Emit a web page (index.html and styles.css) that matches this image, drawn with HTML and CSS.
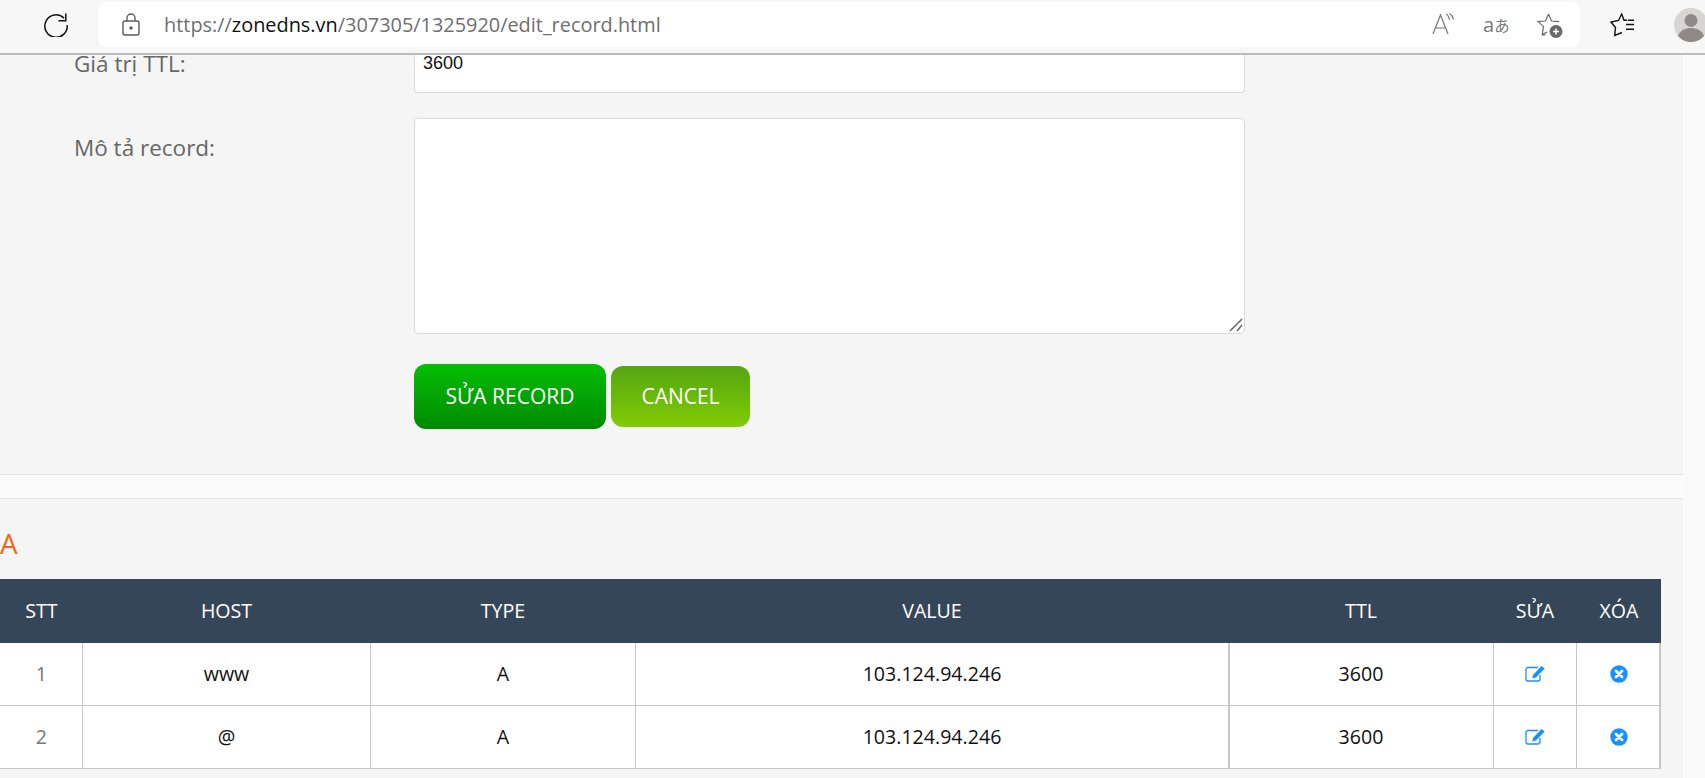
FILE: index.html
```html
<!DOCTYPE html>
<html lang="vi">
<head>
<meta charset="utf-8">
<title>edit record</title>
<link rel="stylesheet" href="styles.css">
</head>
<body>
<div class="toolbar">
  <svg class="reload" width="24" height="24" viewBox="0 0 24 24" fill="none" stroke="#111" stroke-width="1.5"><path d="M20 5.200A11.200 11.200 0 1 0 23.200 12"/><path d="M21.800.5v7.200h-7.300"/></svg>
  <div class="addressbar">
    <svg class="lock" width="20" height="24" viewBox="0 0 20 24" fill="none" stroke="#5c5c5c" stroke-width="1.4"><rect x="2" y="8" width="16" height="14" rx="2"/><path d="M6 8V5a4 4 0 0 1 8 0v3"/><circle cx="10" cy="15" r="1" fill="#5c5c5c"/></svg>
    <div class="url">https://<b>zonedns.vn</b>/307305/1325920/edit_record.html</div>
    <svg class="readaloud" width="24" height="24" viewBox="0 0 24 24" fill="none" stroke="#777" stroke-width="1.2"><path d="M1 21 8.500 2 16 21M3.800 15h9.400"/><path d="M14 1c2 1 3 3 3.500 6M17.500 .5c2 1.200 3.500 3.500 4 6"/></svg>
    <span class="translate">a<span class="kana">あ</span></span>
    <svg class="favadd" width="28" height="28" viewBox="0 0 28 28"><path d="M13.500 3l3 7 7.500.6M10.500 24l-3.300 0 1.300-8.600L3 10.600l7.500-.6 3-7M7.200 23.600l5-2.600" fill="none" stroke="#6a6a6a" stroke-width="1.2"/><circle cx="21" cy="20.500" r="6.500" fill="#6a6a6a"/><path d="M18 20.500h6M21 17.500v6" stroke="#fff" stroke-width="1.600"/></svg>
  </div>
  <svg class="favlist" width="26" height="26" viewBox="0 0 26 26" fill="none" stroke="#111" stroke-width="1.400"><path d="M17 7.200h-3L11.700 1 8.500 7.500 1 9l4.500 5.500-.8 8 7.300-3"/><path d="M18 7.200h6M16 11.500h8M16 16.300h8"/></svg>
  <svg class="avatar" width="34" height="34" viewBox="0 0 34 34"><circle cx="17" cy="17" r="17" fill="#d8d6d3"/><circle cx="17" cy="12.500" r="6.500" fill="#8f8a85"/><path d="M4 28c2-6 8-8 13-8s11 2 13 8a17 17 0 0 1-26 0z" fill="#8f8a85"/></svg>
</div>

<div class="page">
  <div class="content">
    <form class="record-form">
      <div class="form-row ttl-row">
        <label>Giá trị TTL:</label>
        <input class="ttl-input" type="text" value="3600">
      </div>
      <div class="form-row">
        <label>Mô tả record:</label>
        <div class="desc-wrap">
          <textarea class="desc-input"></textarea>
          <svg class="grip" width="14" height="14" viewBox="0 0 14 14" stroke="#666" stroke-width="1.500"><path d="M1 13 13 1M8 13l5-6"/></svg>
        </div>
      </div>
      <div class="form-actions">
        <button class="btn btn-save" type="button">SỬA RECORD</button>
        <button class="btn btn-cancel" type="button">CANCEL</button>
      </div>
    </form>
    <div class="divider"></div>
    <h3 class="record-title">A</h3>
    <table class="record-table">
      <colgroup>
        <col class="c-stt"><col class="c-host"><col class="c-type"><col class="c-value"><col class="c-ttl"><col class="c-edit"><col class="c-del">
      </colgroup>
      <thead>
        <tr><th>STT</th><th>HOST</th><th>TYPE</th><th>VALUE</th><th>TTL</th><th>SỬA</th><th>XÓA</th></tr>
      </thead>
      <tbody>
        <tr class="row-first">
          <td class="num">1</td><td>www</td><td>A</td><td>103.124.94.246</td><td>3600</td>
          <td><svg class="ico" width="20" height="16" viewBox="0 0 20 16"><use href="#ico-edit"/></svg></td>
          <td><svg class="ico" width="18" height="18" viewBox="0 0 18 18"><use href="#ico-del"/></svg></td>
        </tr>
        <tr>
          <td class="num">2</td><td>@</td><td>A</td><td>103.124.94.246</td><td>3600</td>
          <td><svg class="ico" width="20" height="16" viewBox="0 0 20 16"><use href="#ico-edit"/></svg></td>
          <td><svg class="ico" width="18" height="18" viewBox="0 0 18 18"><use href="#ico-del"/></svg></td>
        </tr>
      </tbody>
    </table>
  </div>
</div>

<svg width="0" height="0" class="defs">
  <symbol id="ico-edit" viewBox="0 0 20 16">
    <path d="M13 1.500H3a2 2 0 0 0-2 2v9.500a2 2 0 0 0 2 2h10a2 2 0 0 0 2-2V9" fill="none" stroke="#1890ff" stroke-width="1.300"/>
    <path d="M16.500 0l3.200 2.500-8.700 9-3.800 1 1-3.700z" fill="#1890ff"/>
  </symbol>
  <symbol id="ico-del" viewBox="0 0 18 18">
    <circle cx="9" cy="9" r="8.700" fill="#1890ff"/>
    <path d="M6 6l6 6M12 6l-6 6" stroke="#fff" stroke-width="2.800" stroke-linecap="round"/>
  </symbol>
</svg>
</body>
</html>
```

FILE: styles.css
```css
* {
  box-sizing: border-box;
}
html, body {
  margin: 0;
  height: 100%;
  overflow: hidden;
}
body {
  background-color: #f9f9f9;
  font-family: "Open Sans", "Noto Sans", sans-serif;
  color: #222;
}

/* browser bar */
.toolbar {
  height: 55px;
  background-color: #f7f7f7;
  border-bottom: 2px solid #bdbdbd;
  display: flex;
  align-items: flex-start;
  padding-top: 2px;
}
.reload {
  margin: 11px 0 0 44px;
  flex: none;
}
.addressbar {
  width: 1482px;
  height: 45px;
  margin-left: 30px;
  background-color: #fff;
  border-radius: 8px;
  display: flex;
  align-items: center;
  padding-left: 23px;
  flex: none;
}
.lock {
  flex: none;
}
.url {
  margin-left: 23px;
  width: 1268px;
  font-size: 19.900px;
  color: #6f6f6f;
  white-space: nowrap;
}
.url b {
  font-weight: 400;
  color: #111;
}
.readaloud {
  flex: none;
}
.translate {
  margin-left: 27px;
  width: 31px;
  font-size: 20px;
  color: #777;
  white-space: nowrap;
}
.kana {
  font-family: "Noto Sans CJK JP", sans-serif;
  font-size: 15.500px;
}
.favadd {
  margin-left: 21px;
  flex: none;
}
.favlist {
  margin: 11px 0 0 30px;
  flex: none;
}
.avatar {
  margin: 6px 0 0 38px;
  flex: none;
}

/* page */
.page {
  width: 1683px;
  height: 723px;
  background-color: #f5f5f5;
  overflow: hidden;
}
.record-form {
  padding-left: 74px;
}
.form-row {
  display: flex;
  align-items: flex-start;
  margin-bottom: 25px;
}
.form-row label {
  width: 340px;
  flex: none;
  font-size: 22.500px;
  color: #666;
  padding-top: 14px;
}
.ttl-row label {
  padding-top: 0;
  line-height: 18px;
}
.ttl-input {
  width: 831px;
  height: 38px;
  border: 1px solid #d9d9d9;
  border-top: 0;
  border-radius: 0 0 4px 4px;
  padding: 0 8px 20px;
  font-family: "Liberation Sans", sans-serif;
  font-size: 18px;
  color: #111;
  background-color: #fff;
}
.desc-wrap {
  position: relative;
  width: 831px;
  height: 216px;
}
.desc-input {
  width: 100%;
  height: 100%;
  border: 1px solid #d9d9d9;
  border-radius: 4px;
  background-color: #fff;
  display: block;
  resize: none;
}
.grip {
  position: absolute;
  right: 2px;
  bottom: 2px;
}
.form-actions {
  margin: 30px 0 0 340px;
  display: flex;
  align-items: center;
  gap: 5px;
}
.btn {
  font-family: "Open Sans", sans-serif;
  font-size: 21px;
  color: #fff;
  border: 0;
  border-radius: 12px;
  padding: 0 0 2px;
}
.btn-save {
  width: 192px;
  height: 65px;
  background: linear-gradient(to bottom, #05be05, #008a00);
}
.btn-cancel {
  width: 139px;
  height: 61px;
  background: linear-gradient(to bottom, #55a511, #80cc04);
}

.divider {
  height: 25px;
  margin-top: 45px;
  background-color: #fbfbfb;
  border-top: 1px solid #e4e4e4;
  border-bottom: 1px solid #e4e4e4;
}
.record-title {
  margin: 29px 0 0;
  height: 51px;
  font-size: 28px;
  line-height: 30px;
  font-weight: 400;
  color: #f26522;
}

/* records */
.record-table {
  width: 1661px;
  table-layout: fixed;
  border-collapse: collapse;
  font-size: 19.600px;
  text-align: center;
}
.c-stt { width: 82px; }
.c-host { width: 288px; }
.c-type { width: 265px; }
.c-value { width: 593px; }
.c-ttl { width: 265px; }
.c-edit { width: 83px; }
.c-del { width: 85px; }
.record-table th {
  height: 64px;
  background-color: #364659;
  color: #fff;
  font-weight: 400;
  padding: 0 0 2px 1px;
}
.record-table td {
  height: 63px;
  background-color: #fff;
  border: 1px solid #c8c8c8;
  border-top: 0;
  color: #111;
  padding: 0 0 0 1px;
}
.record-table .row-first td {
  height: 62px;
}
.record-table td:first-child {
  border-left: 0;
}
.record-table td:nth-child(5) {
  box-shadow: inset 1px 0 0 #c8c8c8;
}
.record-table td:last-child {
  border-right: 0;
  box-shadow: inset -2px 0 0 #c8c8c8;
}
.record-table td.num {
  color: #777;
}
.ico {
  display: block;
  margin: 0 auto;
}
.defs {
  position: absolute;
}
```
